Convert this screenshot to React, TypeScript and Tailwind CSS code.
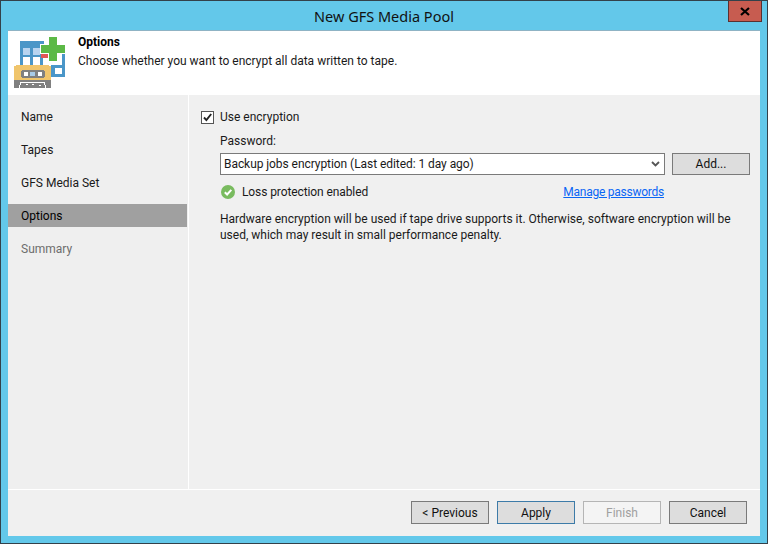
const font = "font-['Roboto','Noto_Sans',sans-serif]";

function PoolIcon() {
  return (
    <svg width="52" height="53" viewBox="0 0 52 53" className="shrink-0" shapeRendering="crispEdges">
      <path d="M6 4h24v16H6z" fill="#4a96c8" />
      <path d="M9 11h7v7H9zM19 11h7v7h-7z" fill="#b8d4f0" />
      <path d="M6 20h3v8H6zM16 20h3v8h-3zM26 20h3v8h-3z" fill="#4a96c8" />
      <path d="M48 15h3v25h-3z" fill="#4a96c8" />
      <path d="M37 28h14v12H37z" fill="#4a96c8" />
      <path d="M41 31h7v6h-7z" fill="#fff" />
      <path d="M0 28h37v15H0z" fill="#f0c56c" />
      <path d="M0 28h2v1H0zM35 28h2v1h-2z" fill="#fff" />
      <path d="M8 33h22v8H8zM7 34h24v6H7z" fill="#808080" />
      <path d="M9.5 35h4v4h-4zM23.5 35h4v4h-4z" fill="#fff" />
      <path d="M16 35h5v4h-5z" fill="#a8cbe8" />
      <path d="M0 43h37v8H0z" fill="#808080" />
      <path d="M5 51l2-6h23l2 6" fill="none" stroke="#fff" strokeWidth="1" />
      <path d="M12 47h2v1h-2zM18 47h2v1h-2zM25 48h2v1h-2z" fill="#fff" />
      <path d="M34 0h9v8h8v9h-8v8h-9v-8h-8V7h8z" fill="#fff" />
      <path d="M35 0h8v8h8v8h-8v8h-8v-8h-8V8h8z" fill="#5cb946" />
      <path d="M27 17h7v4h-7z" fill="#e25555" />
    </svg>
  );
}

function Btn({ label, kind }: { label: string; kind?: "primary" | "disabled" }) {
  const cls =
    kind === "primary"
      ? "border-[#3d7ba8] bg-[#dddddd] text-[#111]"
      : kind === "disabled"
        ? "border-[#b5b5b5] bg-[#f4f4f4] text-[#a0a0a0]"
        : "border-[#7a7a7a] bg-[#dddddd] text-[#111]";
  return (
    <div className={`flex h-[23px] w-[78px] items-center justify-center border text-[12px] ${cls}`}>
      {label}
    </div>
  );
}

const steps = ["Name", "Tapes", "GFS Media Set", "Options", "Summary"];

export default function App() {
  return (
    <div className={`flex h-[544px] w-[768px] flex-col border border-[#33414a] bg-[#63c8ea] ${font} text-[12px] leading-4 text-[#1a1a1a]`}>
      <div className="relative flex h-[29px] shrink-0 items-center justify-center font-['Noto_Sans',sans-serif] text-[14.5px] text-[#111]">
        New GFS Media Pool
        <div className="absolute top-0 right-[5px] flex h-[21px] w-[34px] items-center justify-center border border-t-0 border-[#5a3030] bg-[#c75c50]">
          <svg width="10" height="9" viewBox="0 0 10 9">
            <path d="M1 1l8 7M9 1L1 8" stroke="#000" strokeWidth="2.2" />
          </svg>
        </div>
      </div>
      <div className="mx-[7px] flex min-h-0 flex-1 flex-col border-t border-[#8fb3c4] bg-[#f0f0f0]">
        <div className="flex h-[64px] shrink-0 bg-white pt-[6px] pl-[6px]">
          <PoolIcon />
          <div className="ml-[12px] -mt-[3px]">
            <div className="font-bold text-[#000]">Options</div>
            <div className="mt-[3px]">Choose whether you want to encrypt all data written to tape.</div>
          </div>
        </div>
        <div className="flex min-h-0 flex-1">
          <div className="flex w-[181px] shrink-0 flex-col gap-[10px] border-r border-white bg-[#efefef] pt-[10px] pr-px">
            {steps.map((s) => (
              <div
                key={s}
                className={`flex h-[23px] items-center pl-[13px] ${s === "Options" ? "bg-[#a0a0a0] text-[#000]" : s === "Summary" ? "text-[#6d6d6d]" : ""}`}
              >
                {s}
              </div>
            ))}
          </div>
          <div className="min-w-0 flex-1 pt-[14px] pl-[12px]">
            <div className="flex h-[16px] items-center">
              <div className="flex h-[13px] w-[13px] items-center justify-center border border-[#555] bg-white">
                <svg width="11" height="11" viewBox="0 0 11 11">
                  <path d="M2 5.5l2.4 2.6L9.2 2" fill="none" stroke="#222" strokeWidth="1.9" />
                </svg>
              </div>
              <span className="ml-[6px]">Use encryption</span>
            </div>
            <div className="mt-[8px] ml-[19px]">
              <div>Password:</div>
              <div className="mt-[4px] flex gap-[7px]">
                <div className="flex h-[22px] w-[445px] items-center justify-between border border-[#7a7a7a] bg-white pr-[4px] pl-[3px]">
                  <span className="tracking-[-0.06px]">Backup jobs encryption (Last edited: 1 day ago)</span>
                  <svg width="9" height="6" viewBox="0 0 9 6">
                    <path d="M1 1l3.5 3.5L8 1" fill="none" stroke="#555" strokeWidth="1.8" />
                  </svg>
                </div>
                <div className="flex h-[22px] w-[78px] items-center justify-center border border-[#7a7a7a] bg-[#dddddd] text-[#111]">
                  Add...
                </div>
              </div>
              <div className="mt-[9px] flex h-[16px] w-[444px] items-center justify-between">
                <div className="flex items-center">
                  <svg width="14" height="14" viewBox="0 0 14 14" className="ml-px">
                    <circle cx="7" cy="7" r="7" fill="#79bb5f" />
                    <path d="M3.8 7.2l2.3 2.3 4.2-4.6" fill="none" stroke="#fff" strokeWidth="2" />
                  </svg>
                  <span className="ml-[7px] tracking-[-0.1px]">Loss protection enabled</span>
                </div>
                <span className="tracking-[-0.25px] text-[#0a66f5] underline">Manage passwords</span>
              </div>
              <p className="mt-[11px] w-[520px]">
                Hardware encryption will be used if tape drive supports it. Otherwise, software encryption will be
                used, which may result in small performance penalty.
              </p>
            </div>
          </div>
        </div>
        <div className="flex h-[47px] shrink-0 justify-end gap-[8px] border-t border-white pt-[11px] pr-[13px]">
          <Btn label="< Previous" />
          <Btn label="Apply" kind="primary" />
          <Btn label="Finish" kind="disabled" />
          <Btn label="Cancel" />
        </div>
      </div>
      <div className="h-[7px] shrink-0" />
    </div>
  );
}
